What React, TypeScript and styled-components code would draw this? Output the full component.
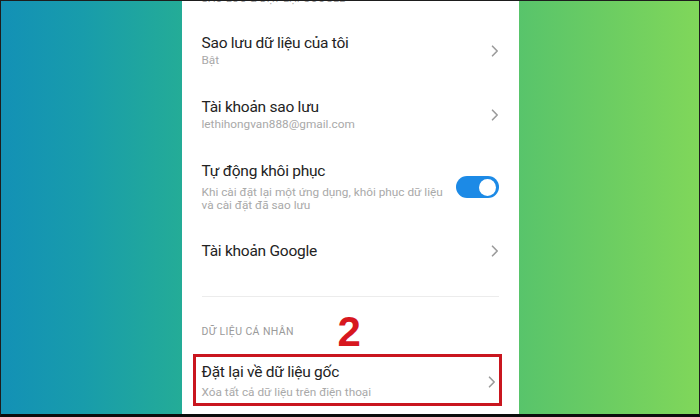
import React, { FC } from 'react';
import styled, { createGlobalStyle } from 'styled-components';

const GlobalStyle = createGlobalStyle`
  html, body {
    margin: 0;
    padding: 0;
    background: #ffffff;
  }
  * {
    box-sizing: border-box;
  }
`;

const textColor = '#232323';
const subColor = '#a9a9a9';
const labelColor = '#9a9a9a';
const chevronColor = '#9b9b9b';
const accentBlue = '#1c8ae6';
const markRed = '#c9161f';

interface IItemProps {
    title: string
    subtitle?: React.ReactNode
    toggle?: boolean
}

const Chevron: FC = () => (
    <ChevronIcon viewBox="0 0 8 12" width={8} height={12}>
        <path d="M1.5 1.2 L6.2 6 L1.5 10.8" fill="none" stroke={chevronColor} strokeWidth={1.6}
              strokeLinecap="round" strokeLinejoin="round"/>
    </ChevronIcon>
);

const SettingItem: FC<IItemProps> = ({title, subtitle, toggle}) => {
    return (
        <ItemRow>
            <ItemText>
                <ItemTitle>{title}</ItemTitle>
                {subtitle && <ItemSub $wide={!!toggle}>{subtitle}</ItemSub>}
            </ItemText>
            {toggle ? (
                <Switch>
                    <Knob/>
                </Switch>
            ) : (
                <Chevron/>
            )}
        </ItemRow>
    );
};

const App: FC = () => {
    return (
        <>
            <GlobalStyle/>
            <Frame>
                <SideLeft/>
                <Phone>
                    <SectionLabel>Sao lưu &amp; đặt lại Google</SectionLabel>
                    <SettingItem title="Sao lưu dữ liệu của tôi" subtitle="Bật"/>
                    <SettingItem title="Tài khoản sao lưu" subtitle="lethihongvan888@gmail.com"/>
                    <SettingItem
                        title="Tự động khôi phục"
                        toggle
                        subtitle={<>Khi cài đặt lại một ứng dụng, khôi phục dữ liệu<br/>và cài đặt đã sao lưu</>}
                    />
                    <SettingItem title="Tài khoản Google"/>
                    <Divider/>
                    <SectionRow>
                        <SectionLabel>Dữ liệu cá nhân</SectionLabel>
                        <StepNumber>2</StepNumber>
                    </SectionRow>
                    <Highlight>
                        <SettingItem title="Đặt lại về dữ liệu gốc" subtitle="Xóa tất cả dữ liệu trên điện thoại"/>
                    </Highlight>
                </Phone>
                <SideRight/>
            </Frame>
        </>
    );
};

export default App;

const Frame = styled.div`
  width: 700px;
  height: 417px;
  display: flex;
  overflow: hidden;
  border: 1px solid #1d1d1d;
  border-bottom: 3px solid #0c0c0c;
  font-family: Roboto, "Noto Sans", "Liberation Sans", sans-serif;
`
const SideLeft = styled.div`
  flex: 1;
  background: linear-gradient(90deg, #1391b6 0%, #189cab 45%, #24ac97 100%);
`
const SideRight = styled.div`
  flex: 1;
  background: linear-gradient(90deg, #58c46b 0%, #6ccd62 50%, #80d75a 100%);
`
const Phone = styled.div`
  width: 337px;
  flex-shrink: 0;
  background: #ffffff;
  display: flex;
  flex-direction: column;
  padding: 0 20px;
  margin-top: -9px;
`
const SectionLabel = styled.div`
  font-size: 10.5px;
  line-height: 14px;
  color: ${labelColor};
  text-transform: uppercase;
  letter-spacing: 0.4px;
  margin-bottom: 13px;
`
const SectionRow = styled.div`
  position: relative;
  margin-top: 28px;

  ${SectionLabel} {
    margin-bottom: 15px;
  }
`
const StepNumber = styled.div`
  position: absolute;
  left: 136px;
  top: -14px;
  font-family: "Liberation Sans", Arial, sans-serif;
  font-weight: 700;
  font-size: 42px;
  line-height: 42px;
  color: #d7171f;
`
const ItemRow = styled.div`
  display: flex;
  align-items: center;
  justify-content: space-between;
  gap: 12px;
  padding: 15px 0;
`
const ItemText = styled.div`
  display: flex;
  flex-direction: column;
  min-width: 0;
`
const ItemTitle = styled.div`
  font-size: 15.5px;
  line-height: 18px;
  letter-spacing: -0.25px;
  color: ${textColor};
  white-space: nowrap;
`
const ItemSub = styled.div<{ $wide: boolean }>`
  font-size: 11.8px;
  line-height: ${p => p.$wide ? '13px' : '16px'};
  margin-top: ${p => p.$wide ? '6px' : '0'};
  color: ${subColor};
  white-space: nowrap;
`
const ChevronIcon = styled.svg`
  flex-shrink: 0;
  display: block;
`
const Switch = styled.div`
  width: 43px;
  height: 22px;
  border-radius: 11px;
  background: ${accentBlue};
  flex-shrink: 0;
  display: flex;
  align-items: center;
  justify-content: flex-end;
  padding-right: 3px;
`
const Knob = styled.div`
  width: 17px;
  height: 17px;
  border-radius: 50%;
  background: #ffffff;
`
const Divider = styled.div`
  height: 1px;
  background: #ececec;
  margin-top: 21px;
`
const Highlight = styled.div`
  border: 3px solid ${markRed};
  margin: 0 -3px 0 -9px;
  padding: 0 3px 0 6px;

  ${ItemRow} {
    padding: 6px 0 3px;
  }

  ${ItemSub} {
    margin-top: 3px;
  }
`
